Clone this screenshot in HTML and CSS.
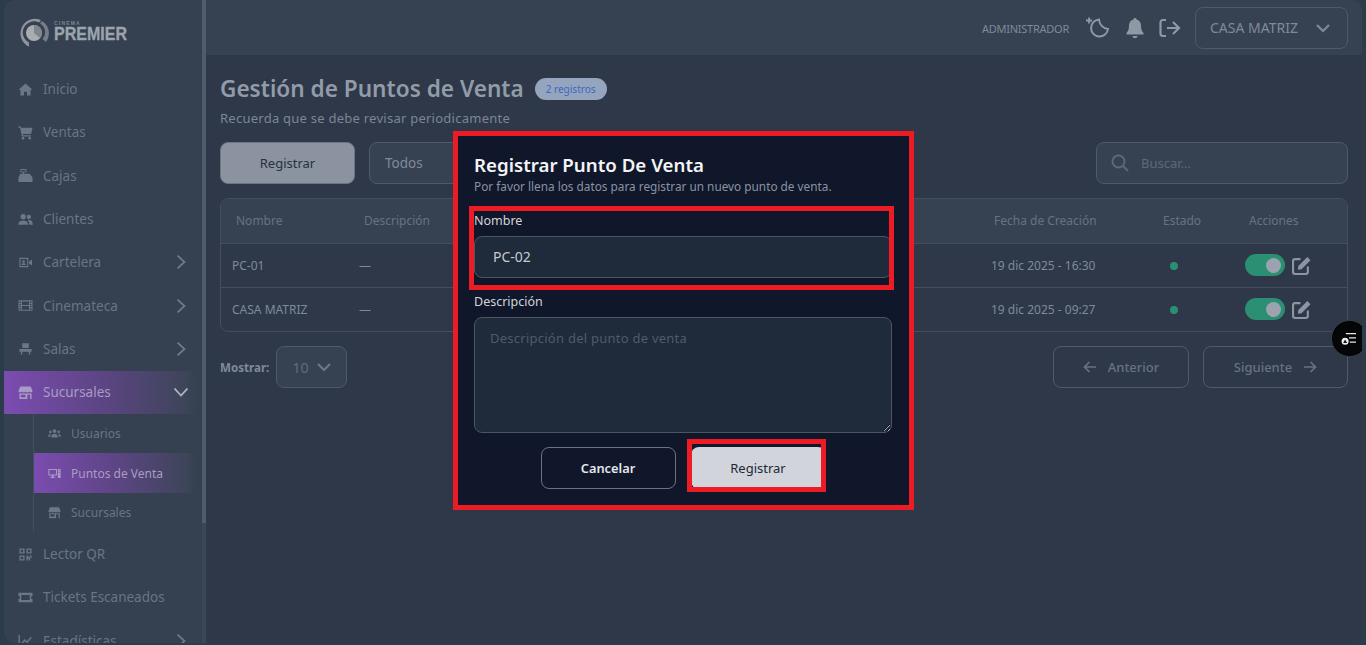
FILE: index.html
```html
<!DOCTYPE html>
<html lang="es">
<head>
	<meta charset="utf-8">
	<meta name="viewport" content="width=device-width, initial-scale=1">
	<title>Puntos de Venta</title>
	<link rel="stylesheet" href="styles.css">
</head>
<body>
<div class="app">
	<aside class="sidebar">
		<div class="side-content">
			<div class="logo">
				<svg class="logo-mark" viewBox="0 0 32 32"><path d="M23 3.2A14.5 14.5 0 1 0 11 29.7L11 25.5A10.5 10.5 0 1 1 21 5.5Z" fill="#8e949c"/><path d="M24 4A14.5 14.5 0 0 1 28 25L24.5 22A10 10 0 0 0 22 6.5Z" fill="#767d88"/><circle cx="16" cy="16" r="8" fill="#a9adb2"/><path d="M16 8A8 8 0 0 1 22 21L16 16Z" fill="#7f858d"/></svg>
				<div class="logo-text">
					<span class="logo-small">CINEMA</span>
					<span class="logo-big">PREMIER</span>
				</div>
			</div>
			<nav class="nav">
				<a class="nav-item"><svg class="ico" viewBox="0 0 16 16"><path d="M8 1.5 15.5 8.2H13.4V14.5H9.6V10.4H6.4V14.5H2.6V8.2H.5Z"/></svg>Inicio</a>
				<a class="nav-item"><svg class="ico" viewBox="0 0 16 16"><path d="M.3 1.5H3L3.4 3H15.5L14 9.5H5L5.3 11H13.6V12.3H4.2L2.2 2.8H.3Z"/><circle cx="5.3" cy="14" r="1.4"/><circle cx="12.5" cy="14" r="1.4"/></svg>Ventas</a>
				<a class="nav-item"><svg class="ico" viewBox="0 0 16 16"><path d="M2.5 1H9V4.6H6.2V6H12.5L15.5 10V15H.5V10L2.5 6H5V4.6H2.5ZM3.5 2V3.6H8V2Z" fill-rule="evenodd"/></svg>Cajas</a>
				<a class="nav-item"><svg class="ico" viewBox="0 0 16 16"><circle cx="5.5" cy="5" r="2.8"/><circle cx="11.6" cy="5.3" r="2.3"/><path d="M.3 13.5C.3 10.5 2.5 9 5.5 9S10.7 10.5 10.7 13.5ZM11.9 13.5C11.9 11.5 11.4 10 10.2 8.9 10.9 8.6 11.5 8.5 12 8.5 14.2 8.5 15.8 10.2 15.8 13.5Z"/></svg>Clientes</a>
				<a class="nav-item"><svg class="ico" viewBox="0 0 16 16"><path d="M1.5 3H11V13H1.5ZM2.7 4.2V11.8H9.8V4.2ZM11.8 7 15 4.8V11.2L11.8 9Z" fill-rule="evenodd"/><circle cx="6" cy="7" r="1.4"/><path d="M3.8 10.6C4 9.3 5 8.9 6 8.9S8 9.3 8.2 10.6Z"/></svg>Cartelera<svg class="chev" viewBox="0 0 12 12"><path d="M3 .5 9 6 3 11.5"/></svg></a>
				<a class="nav-item"><svg class="ico" viewBox="0 0 16 16"><path d="M.5 2.5H15.5V13.5H.5ZM1.6 3.6V5.2H3.2V3.6ZM1.6 6.3V7.4H3.2V6.3ZM1.6 8.6V9.7H3.2V8.6ZM1.6 10.8V12.4H3.2V10.8ZM12.8 3.6V5.2H14.4V3.6ZM12.8 6.3V7.4H14.4V6.3ZM12.8 8.6V9.7H14.4V8.6ZM12.8 10.8V12.4H14.4V10.8ZM4.3 3.6V7.4H11.7V3.6ZM4.3 8.6V12.4H11.7V8.6Z" fill-rule="evenodd"/></svg>Cinemateca<svg class="chev" viewBox="0 0 12 12"><path d="M3 .5 9 6 3 11.5"/></svg></a>
				<a class="nav-item"><svg class="ico" viewBox="0 0 16 16"><path d="M4.5 2.5H11.5V7.5H4.5ZM1.5 8.5H14.5V11.5H13V14.5H11.5V11.5H4.5V14.5H3V11.5H1.5Z"/></svg>Salas<svg class="chev" viewBox="0 0 12 12"><path d="M3 .5 9 6 3 11.5"/></svg></a>
				<a class="nav-item active"><svg class="ico" viewBox="0 0 16 16"><path d="M2.5 1.5H13.5L15.5 6.2C15.5 7.4 14.6 8 13.7 8S12.2 7.5 11.8 7C11.4 7.5 10.7 8 9.9 8S8.4 7.5 8 7C7.6 7.5 6.9 8 6.1 8S4.6 7.5 4.2 7C3.8 7.5 3.2 8 2.3 8S.5 7.4.5 6.2ZM1.5 9H14.5V15H1.5ZM3 10.3V13H8V10.3ZM10 10.3V15H13V10.3Z" fill-rule="evenodd"/></svg>Sucursales<svg class="chev" viewBox="0 0 12 12"><path d="M.5 3 6 9 11.5 3"/></svg></a>
				<div class="sub">
					<a class="sub-item"><svg class="ico-sm" viewBox="0 0 16 16"><circle cx="8" cy="5" r="2.3"/><circle cx="2.9" cy="6" r="1.6"/><circle cx="13.1" cy="6" r="1.6"/><path d="M3.8 13C3.8 10 5.5 8.3 8 8.3S12.2 10 12.2 13ZM.2 12C.2 9.6 1.2 8.6 3 8.6L3.6 8.8C2.9 9.6 2.6 10.6 2.6 12ZM15.8 12C15.8 9.6 14.8 8.6 13 8.6L12.4 8.8C13.1 9.6 13.4 10.6 13.4 12Z"/></svg>Usuarios</a>
					<a class="sub-item active"><svg class="ico-sm" viewBox="0 0 16 16"><path d="M.5 2.5H11V10.5H7V12.5H9V13.5H2.5V12.5H4.5V10.5H.5ZM1.7 3.7V9.3H9.8V3.7ZM12 2.5H15.5V13.5H12ZM13 4V5H14.5V4ZM13 6V7H14.5V6Z" fill-rule="evenodd"/></svg>Puntos de Venta</a>
					<a class="sub-item"><svg class="ico-sm" viewBox="0 0 16 16"><path d="M2.5 1.5H13.5L15.5 6.2C15.5 7.4 14.6 8 13.7 8S12.2 7.5 11.8 7C11.4 7.5 10.7 8 9.9 8S8.4 7.5 8 7C7.6 7.5 6.9 8 6.1 8S4.6 7.5 4.2 7C3.8 7.5 3.2 8 2.3 8S.5 7.4.5 6.2ZM1.5 9H14.5V15H1.5ZM3 10.3V13H8V10.3ZM10 10.3V15H13V10.3Z" fill-rule="evenodd"/></svg>Sucursales</a>
				</div>
				<a class="nav-item"><svg class="ico" viewBox="0 0 16 16"><path d="M1.5 1.5H7V7H1.5ZM3 3V5.5H5.5V3ZM9 1.5H14.5V7H9ZM10.5 3V5.5H13V3ZM1.5 9H7V14.5H1.5ZM3 10.5V13H5.5V10.5ZM9 9H11V11H12.5V9H14.5V11.5H13V14.5H11.5V12.5H10.5V14.5H9Z" fill-rule="evenodd"/></svg>Lector QR</a>
				<a class="nav-item"><svg class="ico" viewBox="0 0 16 16"><path d="M.5 3H15.5V6.3A1.7 1.7 0 0 0 15.5 9.7V13H.5V9.7A1.7 1.7 0 0 0 .5 6.3ZM3.5 5.3V10.7H12.5V5.3Z" fill-rule="evenodd"/></svg>Tickets Escaneados</a>
				<a class="nav-item"><svg class="ico" viewBox="0 0 16 16"><path d="M.5 2H2V13H15.5V14.5H.5ZM3.5 10.8 7 6.5 9.5 8.8 13.5 4 14.7 5 9.7 11 7.2 8.7 4.7 11.8Z"/></svg>Estadísticas<svg class="chev" viewBox="0 0 12 12"><path d="M3 .5 9 6 3 11.5"/></svg></a>
			</nav>
		</div>
		<div class="side-scroll"><div class="side-thumb"></div></div>
	</aside>

	<main class="main">
		<header class="topbar">
			<span class="role">ADMINISTRADOR</span>
			<svg class="top-ico moon" viewBox="0 0 24 24"><path d="M14 3.500A8.500 8.500 0 1 0 23 13 10 10 0 0 1 14 3.500Z"/><path class="plus" d="M4 1.500V7.500M1 4.500H7"/></svg>
			<svg class="top-ico bell" viewBox="0 0 18 22"><path d="M9 1C10 1 10.6 1.7 10.6 2.6 13.4 3.3 15 5.6 15 8.6 15 12.6 15.8 14.2 17.5 16V17.5H.5V16C2.2 14.2 3 12.6 3 8.6 3 5.6 4.6 3.3 7.4 2.6 7.4 1.7 8 1 9 1ZM6.5 19H11.5C11.5 20.3 10.4 21.2 9 21.2S6.5 20.3 6.5 19Z"/></svg>
			<svg class="top-ico logout" viewBox="0 0 22 20"><path d="M7 2H4C2.500 2 1.500 3 1.500 4.500V15.500C1.500 17 2.500 18 4 18H7M8 10H20M14 4 20 10 14 16"/></svg>
			<div class="branch">CASA MATRIZ<svg class="chev-down" viewBox="0 0 16 16"><path d="M2 5 8 11 14 5"/></svg></div>
		</header>

		<section class="content">
			<div class="title-row">
				<h1>Gestión de Puntos de Venta</h1>
				<span class="badge">2 registros</span>
			</div>
			<p class="subtitle">Recuerda que se debe revisar periodicamente</p>

			<div class="toolbar">
				<button class="btn-primary" type="button">Registrar</button>
				<div class="filter">Todos</div>
				<div class="search">
					<svg viewBox="0 0 18 18"><circle cx="7.5" cy="7.5" r="6"/><path d="M12 12 17 17"/></svg>
					<span>Buscar...</span>
				</div>
			</div>

			<div class="table-wrap">
				<table>
					<colgroup><col class="c-name"><col class="c-desc"><col class="c-date"><col class="c-state"><col class="c-act"></colgroup>
					<thead>
						<tr><th>Nombre</th><th>Descripción</th><th>Fecha de Creación</th><th>Estado</th><th>Acciones</th></tr>
					</thead>
					<tbody>
						<tr>
							<td>PC-01</td><td>—</td><td>19 dic 2025 - 16:30</td><td><span class="dot"></span></td>
							<td><div class="actions"><span class="toggle"><span class="knob"></span></span><svg class="edit" viewBox="1 1 18 18"><path d="M9 4H4C2.8 4 2 4.8 2 6V16C2 17.2 2.8 18 4 18H14C15.2 18 16 17.2 16 16V11"/><path class="fill" d="M7 10.5 15.5 2 18.5 5 10 13.5 6.5 14Z"/></svg></div></td>
						</tr>
						<tr>
							<td>CASA MATRIZ</td><td>—</td><td>19 dic 2025 - 09:27</td><td><span class="dot"></span></td>
							<td><div class="actions"><span class="toggle"><span class="knob"></span></span><svg class="edit" viewBox="1 1 18 18"><path d="M9 4H4C2.8 4 2 4.8 2 6V16C2 17.2 2.8 18 4 18H14C15.2 18 16 17.2 16 16V11"/><path class="fill" d="M7 10.5 15.5 2 18.5 5 10 13.5 6.5 14Z"/></svg></div></td>
						</tr>
					</tbody>
				</table>
			</div>

			<div class="pager">
				<span class="show-label">Mostrar:</span>
				<div class="per-page">10<svg class="chev-down" viewBox="0 0 16 16"><path d="M2 5 8 11 14 5"/></svg></div>
				<div class="pager-btns">
					<div class="page-btn prev"><svg viewBox="0 0 14 14"><path d="M13 7H1.5M6.5 2 1.5 7 6.5 12"/></svg>Anterior</div>
					<div class="page-btn next">Siguiente<svg viewBox="0 0 14 14"><path d="M1 7H12.5M7.5 2 12.5 7 7.5 12"/></svg></div>
				</div>
			</div>
		</section>

		<div class="float-btn">
			<svg viewBox="0 0 20 18"><path class="line" d="M6 2H19M10 7.5H19M11 13H19"/><circle cx="5" cy="12" r="4.5"/><path class="tri" d="M5 9.5 7.5 14H2.5Z"/></svg>
		</div>
	</main>

	<div class="modal">
		<h2>Registrar Punto De Venta</h2>
		<p class="modal-sub">Por favor llena los datos para registrar un nuevo punto de venta.</p>
		<div class="field field-name">
			<label for="nombre">Nombre</label>
			<input id="nombre" type="text" value="PC-02">
			<div class="mark mark-name"></div>
		</div>
		<div class="field field-desc">
			<label for="desc">Descripción</label>
			<textarea id="desc" placeholder="Descripción del punto de venta"></textarea>
		</div>
		<div class="modal-btns">
			<button class="btn-cancel" type="button">Cancelar</button>
			<div class="submit-wrap">
				<button class="btn-submit" type="button">Registrar</button>
				<div class="mark mark-submit"></div>
			</div>
		</div>
	</div>
</div>
</body>
</html>
```

FILE: styles.css
```css
* { box-sizing: border-box; }

html, body {
	margin: 0;
	height: 100%;
	overflow: hidden;
}
body {
	background-color: #2c3c49;
	font-family: "Noto Sans", sans-serif;
	color: #8b95a3;
}

.app {
	position: relative;
	display: flex;
	width: 1358px;
	height: 643px;
	margin: 0 4px;
	border-radius: 10px;
	overflow: hidden;
	background-color: #2e3849;
}

/* sidebar */
.sidebar {
	flex: none;
	display: flex;
	width: 202px;
	background-color: #354050;
}
.side-content {
	flex: 1;
	min-width: 0;
}
.side-scroll {
	flex: none;
	width: 4px;
	background-color: #3b4657;
}
.side-thumb {
	height: 523px;
	background-color: #505c6e;
}
.logo {
	display: flex;
	align-items: center;
	gap: 4px;
	height: 67.5px;
	padding: 0 0 1px 14px;
}
.logo-mark {
	width: 32px;
	height: 32px;
}
.logo-text {
	display: flex;
	flex-direction: column;
	margin-top: -3px;
	font-family: "Liberation Sans", sans-serif;
	font-weight: bold;
	color: #9ca4ae;
}
.logo-small {
	font-size: 5px;
	line-height: 6px;
	letter-spacing: 1.2px;
	color: #7d8592;
}
.logo-big {
	font-size: 18px;
	line-height: 17px;
	-webkit-text-stroke: .3px #9ca4ae;
	transform: scaleX(.89);
	transform-origin: left;
}
.nav-item {
	display: flex;
	align-items: center;
	height: 43.3px;
	margin-right: 6px;
	padding: 0 8px 0 14px;
	font-size: 13.5px;
	color: #687588;
}
.ico {
	flex: none;
	width: 15px;
	height: 15px;
	margin-right: 10px;
	fill: #6b7686;
}
.chev {
	width: 14px;
	height: 14px;
	margin-left: auto;
	fill: none;
	stroke: #6f7a8a;
	stroke-width: 1.5;
}
.nav-item.active {
	background: linear-gradient(90deg, #7b4cb0 0%, #5d4585 50%, #3d4559 95%, #354050 100%);
	color: #a99cc4;
}
.nav-item.active .ico { fill: #a99cc4; }
.nav-item.active .chev { stroke: #b0b5c0; }
.sub {
	margin-left: 29px;
	border-left: 1px solid #434e5e;
}
.sub-item {
	display: flex;
	align-items: center;
	height: 39.5px;
	margin-right: 7px;
	padding-left: 14px;
	font-size: 12px;
	color: #687588;
}
.ico-sm {
	flex: none;
	width: 13px;
	height: 13px;
	margin-right: 10px;
	fill: #6b7686;
}
.sub-item.active {
	background: linear-gradient(90deg, #7b4cb0 0%, #5d4585 50%, #3d4559 95%, #354050 100%);
	color: #a99cc4;
}
.sub-item.active .ico-sm { fill: #a99cc4; }

/* main */
.main {
	flex: 1;
	min-width: 0;
	display: flex;
	flex-direction: column;
}
.topbar {
	display: flex;
	align-items: center;
	flex: none;
	height: 55px;
	padding: 0 14px 0 0;
	background-color: #364252;
}
.role {
	margin-left: auto;
	margin-top: 1px;
	font-size: 11px;
	letter-spacing: -.25px;
	color: #7f8a99;
}
.top-ico { flex: none; }
.moon {
	width: 24px;
	height: 24px;
	margin-left: 16px;
	fill: none;
	stroke: #8f98a5;
	stroke-width: 2;
}
.moon .plus { stroke-width: 1.8; }
.bell {
	width: 18px;
	height: 22px;
	margin-left: 17px;
	fill: #8f98a5;
}
.logout {
	width: 22px;
	height: 20px;
	margin-left: 15px;
	fill: none;
	stroke: #8f98a5;
	stroke-width: 2.2;
}
.branch {
	display: flex;
	align-items: center;
	justify-content: space-between;
	width: 153px;
	height: 42px;
	margin-left: 14px;
	padding: 0 16px 0 14px;
	border: 1px solid #4e5a6b;
	border-radius: 8px;
	font-size: 14px;
	color: #7f8a99;
}
.chev-down {
	width: 16px;
	height: 16px;
	fill: none;
	stroke: #7f8a99;
	stroke-width: 2.2;
}

.content {
	flex: 1;
	padding: 21px 14px 0;
}
.title-row {
	display: flex;
	align-items: center;
	gap: 11px;
	height: 26px;
}
h1 {
	margin: 0 0 2px;
	font-size: 22.6px;
	font-weight: 600;
	color: #929ca9;
}
.badge {
	display: flex;
	align-items: center;
	height: 22px;
	padding: 0 11px;
	border-radius: 11px;
	background-color: #95a5bd;
	font-size: 10px;
	color: #3f68c0;
}
.subtitle {
	margin: 7px 0 0;
	font-size: 13px;
	line-height: 18px;
	letter-spacing: .25px;
	color: #7c8694;
}

.toolbar {
	display: flex;
	gap: 14px;
	margin-top: 15px;
	height: 42px;
}
.btn-primary {
	width: 135px;
	border: 1px solid #6b7584;
	border-radius: 8px;
	background-color: #8b93a0;
	font-family: inherit;
	font-size: 13px;
	color: #283140;
}
.filter {
	display: flex;
	align-items: center;
	width: 200px;
	padding: 0 0 1px 15px;
	border: 1px solid #4e5a6b;
	border-radius: 8px;
	background-color: #364252;
	font-size: 13.5px;
	color: #7f8a99;
}
.search {
	display: flex;
	align-items: center;
	gap: 12px;
	width: 252px;
	margin-left: auto;
	padding-left: 14px;
	border: 1px solid #4e5a6b;
	border-radius: 8px;
	background-color: #364252;
	font-size: 13px;
	color: #5c6878;
}
.search svg {
	width: 18px;
	height: 18px;
	fill: none;
	stroke: #5c6878;
	stroke-width: 2;
}

.table-wrap {
	margin-top: 14px;
	border: 1px solid #434e5f;
	border-radius: 8px;
	overflow: hidden;
}
table {
	width: 100%;
	table-layout: fixed;
	border-collapse: collapse;
}
.c-name { width: 127px; }
.c-desc { width: 631px; }
.c-date { width: 168px; }
.c-state { width: 86px; }
.c-act { width: 114px; }
th {
	height: 44px;
	padding: 0 0 0 15px;
	background-color: #364252;
	font-size: 12px;
	font-weight: 400;
	text-align: left;
	color: #667283;
}
th:nth-child(2) { padding-left: 16px; }
th:nth-child(4), th:nth-child(5) { padding-left: 16px; }
td {
	height: 44px;
	padding: 0 0 0 11px;
	border-top: 1px solid #434e5f;
	font-size: 12px;
	color: #7f8a99;
}
td:nth-child(3), td:nth-child(5) { padding-left: 12px; }
.dot {
	display: block;
	width: 8px;
	height: 8px;
	margin: 2px 0 0 12px;
	border-radius: 50%;
	background-color: #2a8f73;
}
.actions {
	display: flex;
	align-items: center;
	gap: 7px;
}
.toggle {
	display: flex;
	align-items: center;
	justify-content: flex-end;
	width: 40px;
	height: 22px;
	padding-right: 4px;
	border-radius: 11px;
	background-color: #2a8f73;
}
.knob {
	width: 15px;
	height: 15px;
	border-radius: 50%;
	background-color: #9ca3af;
}
.edit {
	width: 19px;
	height: 19px;
	fill: none;
	stroke: #8b95a3;
	stroke-width: 2;
}
.edit .fill {
	fill: #8b95a3;
	stroke: none;
}

.pager {
	display: flex;
	align-items: center;
	height: 42px;
	margin-top: 14px;
}
.show-label {
	font-size: 11.6px;
	font-weight: 700;
	color: #7f8a99;
}
.per-page {
	display: flex;
	align-items: center;
	gap: 8px;
	width: 71px;
	height: 42px;
	margin-left: 7px;
	padding-left: 15px;
	border: 1px solid #4e5a6b;
	border-radius: 8px;
	background-color: #364252;
	font-size: 14px;
	color: #5f6b7b;
}
.per-page .chev-down { stroke: #6b7686; }
.pager-btns {
	display: flex;
	gap: 14px;
	margin-left: auto;
}
.page-btn {
	display: flex;
	align-items: center;
	justify-content: center;
	gap: 11px;
	height: 42px;
	border: 1px solid #4e5a6b;
	border-radius: 8px;
	font-size: 13px;
	font-weight: 500;
	color: #667283;
}
.page-btn svg {
	width: 14px;
	height: 14px;
	fill: none;
	stroke: #667283;
	stroke-width: 1.7;
}
.prev { width: 136px; }
.next { width: 145px; }

.float-btn {
	position: absolute;
	left: 1327px;
	top: 320px;
	display: flex;
	align-items: center;
	padding-left: 8px;
	width: 37px;
	height: 37px;
	border: 1px solid #3a3f47;
	border-radius: 50%;
	background-color: #050608;
	box-shadow: inset 0 0 0 1px #000;
}
.float-btn svg {
	width: 16px;
	height: 14px;
	margin-left: 1px;
}
.float-btn .line {
	fill: none;
	stroke: #e8e8e8;
	stroke-width: 1.6;
}
.float-btn circle { fill: #f0f0f0; }
.float-btn .tri { fill: #111; }

/* modal */
.modal {
	position: absolute;
	left: 449px;
	top: 131px;
	width: 461px;
	height: 379px;
	padding: 17px 17px 0 16px;
	border: 5px solid #ed1c24;
	background-color: #10172a;
}
h2 {
	margin: 0;
	font-size: 18.7px;
	line-height: 23px;
	font-weight: 600;
	color: #f3f4f6;
}
.modal-sub {
	margin: 2px 0 0;
	font-size: 11.8px;
	line-height: 17px;
	color: #8a93a3;
}
.field { position: relative; }
.field label {
	display: block;
	font-size: 12.5px;
	line-height: 17px;
	color: #d1d5db;
}
.field-name { margin-top: 17px; }
.field-desc { margin-top: 15px; }
.field input, .field textarea {
	display: block;
	width: 100%;
	margin-top: 7px;
	border: 1px solid #4b5563;
	border-radius: 8px;
	background-color: #1f2a3a;
	font-family: inherit;
	font-size: 14px;
	outline: none;
}
.field input {
	height: 42px;
	padding: 0 18px 2px;
	color: #c5cad2;
}
.field textarea {
	height: 116px;
	padding: 11px 15px;
	font-size: 13px;
	letter-spacing: .25px;
	color: #c5cad2;
}
.field textarea::placeholder { color: #4f5b6c; }
.mark {
	position: absolute;
	border: 5px solid #ed1c24;
	pointer-events: none;
}
.mark-name {
	left: -5px;
	right: -2px;
	top: -6px;
	bottom: -12px;
}
.modal-btns {
	display: flex;
	justify-content: center;
	gap: 15px;
	margin-top: 14px;
}
.btn-cancel, .btn-submit {
	width: 135px;
	height: 42px;
	border-radius: 8px;
	font-family: inherit;
	font-size: 13px;
}
.btn-cancel {
	border: 1px solid #6b7280;
	background-color: transparent;
	font-weight: 600;
	font-size: 12.8px;
	color: #e5e7eb;
}
.btn-submit {
	display: block;
	border: 0;
	background-color: #d1d5db;
	color: #1f2937;
}
.submit-wrap { position: relative; }
.mark-submit {
	left: -4px;
	right: 0;
	top: -8px;
	bottom: -3px;
}
```
